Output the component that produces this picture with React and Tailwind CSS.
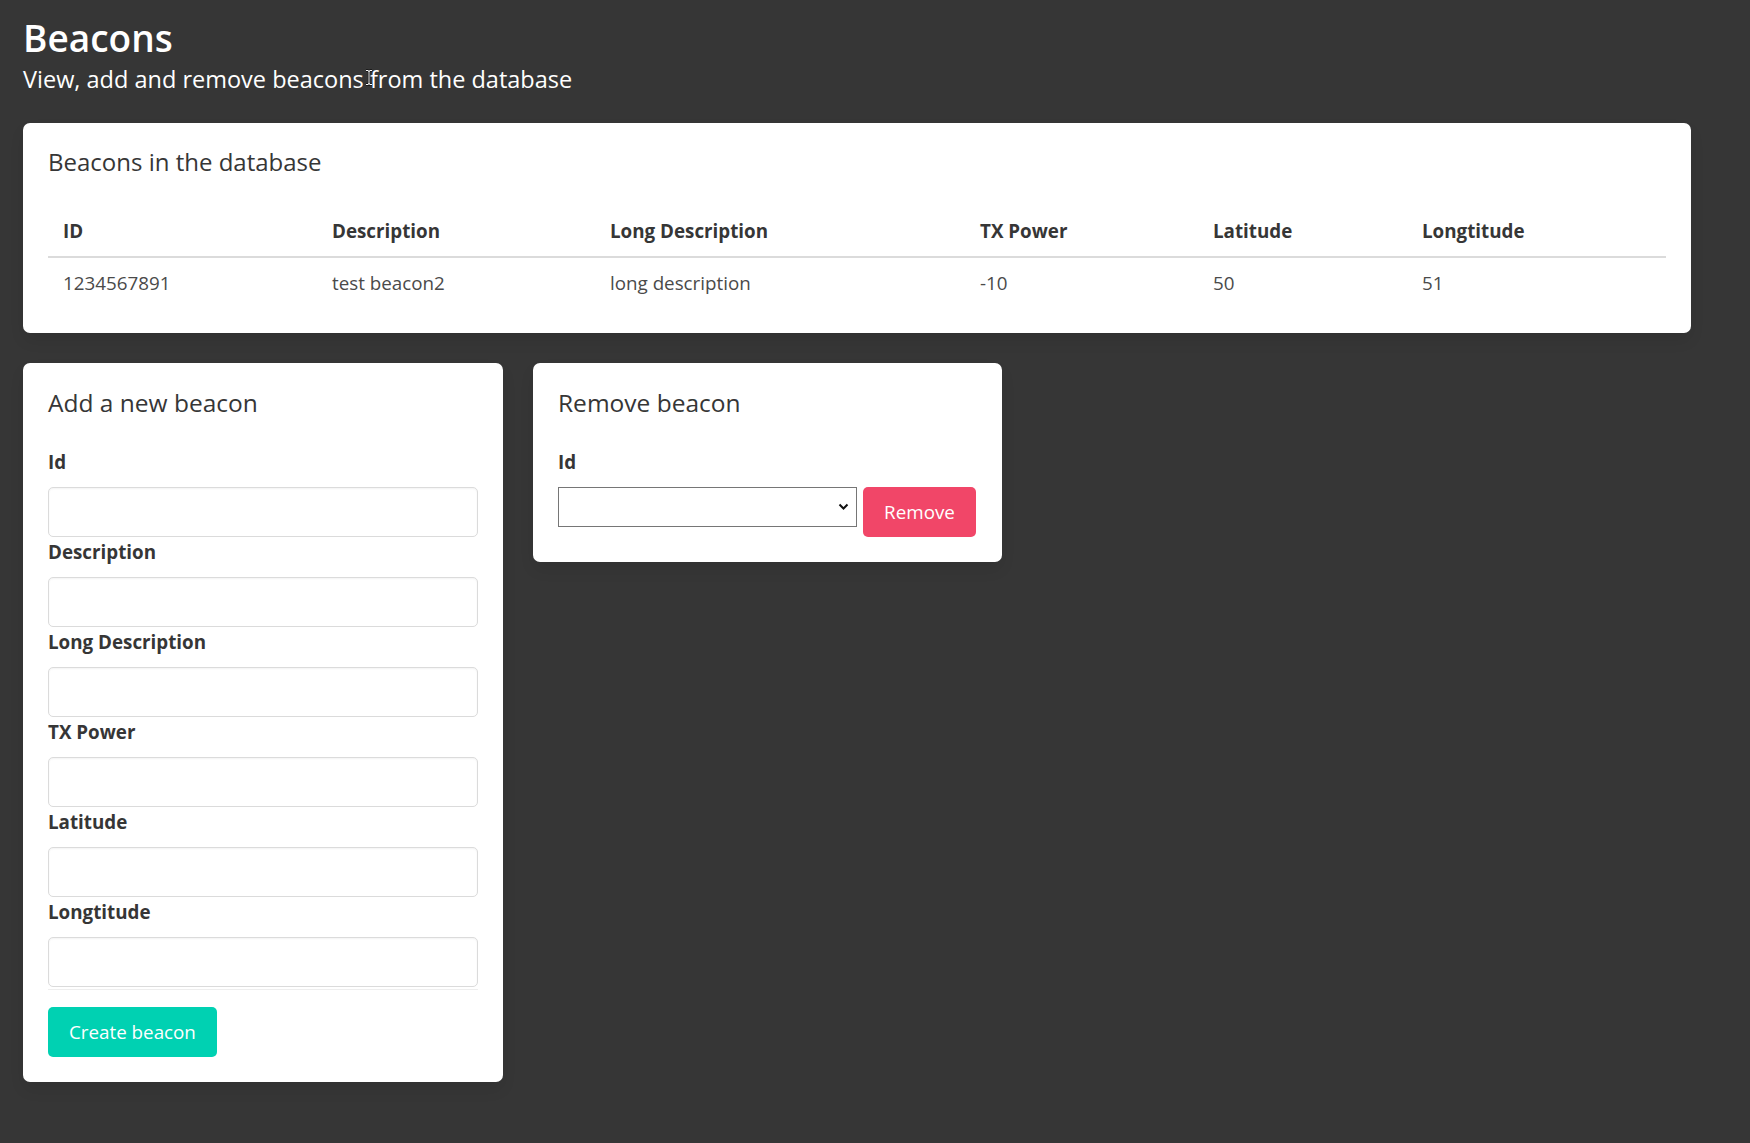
import React from "react";

const font = { fontFamily: '"Open Sans", "Noto Sans", sans-serif' };

function Field({ label }) {
  return (
    <div>
      <div className="h-[30px] text-[18.8px] leading-[30px] font-bold text-[#363636]">{label}</div>
      <input
        className="mt-[10px] block h-[50px] w-full rounded-[5px] border border-[#dbdbdb] bg-white px-[14px] text-[19px] shadow-[inset_0_1px_2px_rgba(10,10,10,0.05)] outline-none"
        type="text"
      />
    </div>
  );
}

export default function App() {
  const cols = [
    { h: "ID", v: "1234567891", w: "w-[269px]" },
    { h: "Description", v: "test beacon2", w: "w-[278px]" },
    { h: "Long Description", v: "long description", w: "w-[370px]" },
    { h: "TX Power", v: "-10", w: "w-[233px]" },
    { h: "Latitude", v: "50", w: "w-[209px]" },
    { h: "Longtitude", v: "51", w: "" },
  ];
  return (
    <div className="min-h-[1143px] bg-[#363636] px-[23px] pt-[15px] pb-[40px]" style={font}>
      <div className="text-[37px] leading-[45px] font-semibold text-white">Beacons</div>
      <div className="relative mt-[4px] text-[23.5px] leading-[30px] text-white">
        View, add and remove beacons from the database
        <svg className="absolute left-[342px] top-[5px]" width="8" height="17" viewBox="0 0 8 17">
          <path d="M1 1.5 H3 Q4 1.5 4 3 V14 Q4 15.5 3 15.5 H1 M7 1.5 H5 Q4 1.5 4 3 M4 14 Q4 15.5 5 15.5 H7" fill="none" stroke="#000" strokeWidth="2.2" />
          <path d="M1 1.5 H3 Q4 1.5 4 3 V14 Q4 15.5 3 15.5 H1 M7 1.5 H5 Q4 1.5 4 3 M4 14 Q4 15.5 5 15.5 H7" fill="none" stroke="#fff" strokeWidth="1" />
        </svg>
      </div>

      <div className="mt-[29px] w-[1668px] rounded-[7px] bg-white p-[25px] shadow-[0_8px_16px_-2px_rgba(10,10,10,0.1)]">
        <div className="h-[28px] text-[24px] leading-[28px] text-[#363636]">Beacons in the database</div>
        <table className="mt-[30px] w-full table-fixed border-collapse leading-[30px]">
          <thead>
            <tr className="border-b-2 border-[#dbdbdb]">
              {cols.map((c) => (
                <th key={c.h} className={`${c.w} px-[15px] py-[10px] text-left text-[18.8px] font-bold text-[#363636]`}>{c.h}</th>
              ))}
            </tr>
          </thead>
          <tbody>
            <tr>
              {cols.map((c) => (
                <td key={c.h} className="px-[15px] py-[10px] text-left text-[18.8px] text-[#4a4a4a]">{c.v}</td>
              ))}
            </tr>
          </tbody>
        </table>
      </div>

      <div className="mt-[30px] flex items-start gap-[30px]">
        <div className="w-[480px] rounded-[7px] bg-white p-[25px] shadow-[0_8px_16px_-2px_rgba(10,10,10,0.1)]">
          <div className="h-[29px] text-[24.5px] leading-[29px] text-[#363636]">Add a new beacon</div>
          <div className="mt-[30px]">
            <Field label="Id" />
            <Field label="Description" />
            <Field label="Long Description" />
            <Field label="TX Power" />
            <Field label="Latitude" />
            <Field label="Longtitude" />
          </div>
          <div className="mt-[2px] h-px bg-[#eeeeee]" />
          <button className="mt-[17px] h-[50px] rounded-[5px] bg-[#00d1b2] px-[21px] text-[18.8px] text-white">Create beacon</button>
        </div>

        <div className="w-[469px] rounded-[7px] bg-white p-[25px] shadow-[0_8px_16px_-2px_rgba(10,10,10,0.1)]">
          <div className="h-[29px] text-[24.5px] leading-[29px] text-[#363636]">Remove beacon</div>
          <div className="mt-[30px] h-[30px] text-[18.8px] leading-[30px] font-bold text-[#363636]">Id</div>
          <div className="mt-[10px] flex items-start gap-[6px]">
            <div className="relative h-[40px] w-[299px] border border-[#767676] bg-white">
              <svg className="absolute right-[7px] top-[15px]" width="11" height="8" viewBox="0 0 11 8">
                <path d="M1.5 1.5 L5.5 5.5 L9.5 1.5" fill="none" stroke="#111" strokeWidth="2" />
              </svg>
            </div>
            <button className="h-[50px] w-[113px] rounded-[5px] bg-[#f14668] text-[18.8px] text-white">Remove</button>
          </div>
        </div>
      </div>
    </div>
  );
}
